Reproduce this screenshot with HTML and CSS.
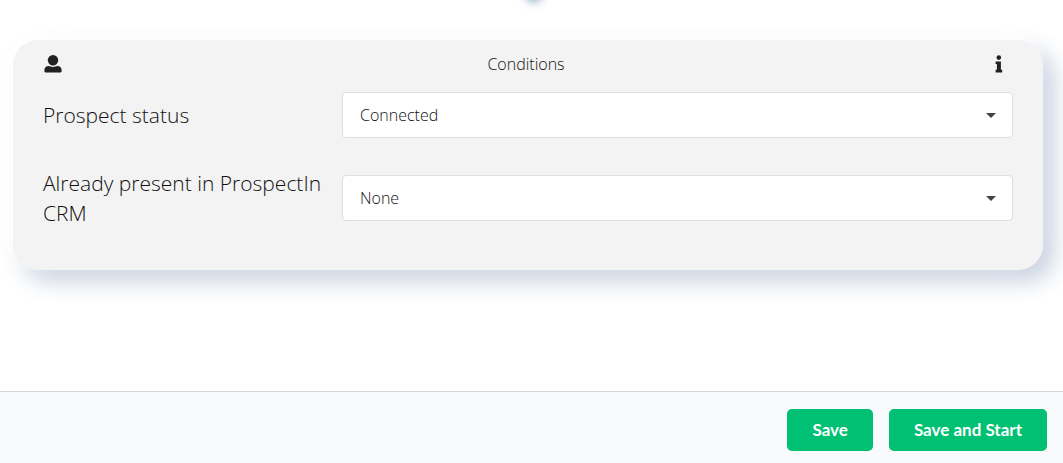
FILE: index.html
```html
<!DOCTYPE html>
<html lang="en">
<head>
    <meta charset="UTF-8">
    <meta name="viewport" content="width=device-width, initial-scale=1.0">
    <title>Conditions</title>
    <link rel="stylesheet" href="styles.css">
</head>
<body>
    <main>
        <span class="step-dot"></span>

        <section class="card">
            <div class="card-header">
                <svg class="icon" viewBox="0 0 18 18" aria-hidden="true">
                    <circle cx="9" cy="5.3" r="5.2"/>
                    <path d="M4.6 11.1C6 11.1 6.8 12 9 12s3-.9 4.4-.9c2.8 0 4.2 1.7 4.2 4v1.1c0 .7-.5 1.2-1.2 1.2H1.6c-.7 0-1.2-.5-1.2-1.2v-1.1c0-2.3 1.4-4 4.2-4z"/>
                </svg>
                <h1>Conditions</h1>
                <svg class="icon" viewBox="0 0 18 18" aria-hidden="true">
                    <circle cx="8.8" cy="2.6" r="2.3"/>
                    <path d="M6.1 6.5h4.8v8.3h1.3v2.6H5.6v-2.6h1.3V9.1H5.6V7q0-.5.5-.5z"/>
                </svg>
            </div>

            <div class="field">
                <label for="status">Prospect status</label>
                <div class="select">
                    <select id="status" name="status">
                        <option>Connected</option>
                        <option>Not connected</option>
                    </select>
                </div>
            </div>

            <div class="field">
                <label for="crm">Already present in ProspectIn CRM</label>
                <div class="select">
                    <select id="crm" name="crm">
                        <option>None</option>
                        <option>Yes</option>
                        <option>No</option>
                    </select>
                </div>
            </div>
        </section>
    </main>

    <footer>
        <button type="button">Save</button>
        <button type="button">Save and Start</button>
    </footer>
</body>
</html>
```

FILE: styles.css
```css
* {
    margin: 0;
    padding: 0;
    box-sizing: border-box;
}

body {
    display: flex;
    flex-direction: column;
    min-height: 100vh;
    overflow-x: hidden;
    background: #fff;
    color: #111;
    font-family: 'Open Sans', 'Noto Sans', sans-serif;
    font-weight: 300;
}

main {
    position: relative;
    flex: 1;
    padding: 40px 20px 40px 13px;
}

/* End of the connector above the card */
.step-dot {
    position: absolute;
    top: -19px;
    left: 50%;
    width: 20px;
    height: 20px;
    margin-left: -10px;
    border-radius: 50%;
    background: #b5dde3;
    box-shadow: 2px 2px 8px #aebbd2;
}

.card {
    padding: 12px 30px 42px;
    border-radius: 25px;
    background: #f3f3f3;
    box-shadow: -6px -6px 16px #fff, 10px 10px 24px #c3cddd;
}

.card-header {
    display: flex;
    align-items: center;
    justify-content: space-between;
    height: 24px;
    margin-bottom: 16px;
    padding-right: 4px;
}

.card-header h1 {
    font-size: 16px;
    font-weight: 300;
}

.icon {
    width: 20px;
    height: 18px;
    fill: #212121;
}

.field {
    display: flex;
    align-items: center;
    gap: 15px;
}

.field + .field {
    margin-top: 30px;
}

.field label {
    flex: 0 0 284px;
    font-size: 21px;
    line-height: 30px;
}

.select {
    position: relative;
    flex: 1;
}

.select::after {
    content: '';
    position: absolute;
    top: 21px;
    right: 17px;
    border: 5px solid transparent;
    border-top-color: #444;
    border-bottom: 0;
    pointer-events: none;
}

select {
    display: block;
    width: 100%;
    height: 46px;
    padding: 0 40px 0 17px;
    border: 1px solid #dedede;
    border-radius: 4px;
    background: #fff;
    color: #111;
    font: inherit;
    font-size: 16px;
    appearance: none;
}

footer {
    display: flex;
    justify-content: flex-end;
    gap: 16px;
    padding: 17px 16px 12px;
    border-top: 1px solid #d5d9dd;
    background: #f8fafc;
}

button {
    height: 42px;
    padding: 0 25px 2px;
    border: none;
    border-radius: 5px;
    background: #00c073;
    color: #fff;
    font-family: Lato, sans-serif;
    font-size: 17px;
    font-weight: 700;
    cursor: pointer;
}
```
